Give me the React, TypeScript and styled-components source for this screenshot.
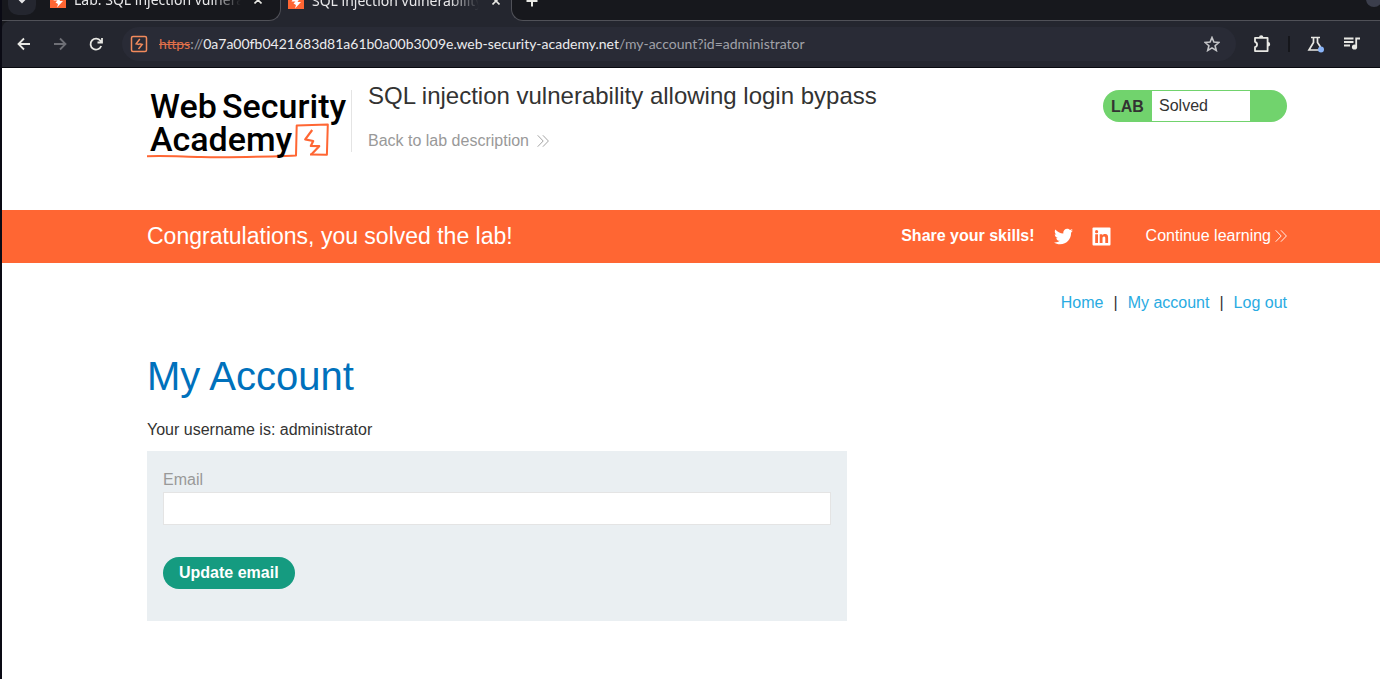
import React from "react";
import styled, { createGlobalStyle, css } from "styled-components";
import { FaTwitter } from "react-icons/fa";

const GlobalStyle = createGlobalStyle`
  * { box-sizing: border-box; }
  body {
    margin: 0;
    background: #fff;
    color: #333332;
    font: 16px/24px "Liberation Sans", Arial, sans-serif;
  }
  a { text-decoration: none; color: inherit; }
  button { font: inherit; border: 0; cursor: pointer; }
  svg { display: block; flex: none; }
`;

const Window = styled.div`
  min-height: 100vh;
  display: flex;
  flex-direction: column;
  border-left: 2px solid #0a0a14;
`;

const Browser = styled.div`
  background: #17181d;
  color: #e8e8ea;
  font-family: "Noto Sans", sans-serif;
  font-size: 14px;
  line-height: 20px;
`;

const TabStrip = styled.div`
  display: flex;
  height: 21px;
  background: #24262f;
  overflow: hidden;
`;

const segment = css`
  display: flex;
  align-items: flex-end;
  padding-bottom: 10px;
`;

const IdleTabs = styled.div`
  ${segment}
  width: 279px;
  gap: 14px;
  padding-left: 6px;
  padding-right: 18px;
  background: #17181d;
  border-bottom: 1px solid #505158;
  border-right: 1px solid #505158;
  border-bottom-right-radius: 12px;
`;

const ActiveTab = styled.div`
  ${segment}
  width: 230px;
  padding: 0 11px 10px 7px;
`;

const StripEnd = styled.div`
  ${segment}
  flex: 1;
  justify-content: space-between;
  padding-left: 11px;
  background: #17181d;
  border-bottom: 1px solid #505158;
  border-left: 1px solid #505158;
  border-bottom-left-radius: 12px;
`;

const TabSearch = styled.button`
  display: grid;
  place-items: center;
  width: 28px;
  height: 28px;
  margin-bottom: -5px;
  padding: 0;
  border-radius: 10px;
  background: #24262f;
  color: #e8e8ea;
`;

const TabBody = styled.div`
  display: flex;
  flex: 1;
  min-width: 0;
  align-items: center;
  gap: 8px;
`;

const TabTitle = styled.span`
  flex: 1;
  overflow: hidden;
  white-space: nowrap;
  mask-image: linear-gradient(to right, #000 80%, transparent 97%);
`;

const IconButton = styled.button<{ $dim?: boolean }>`
  display: grid;
  place-items: center;
  padding: 0;
  background: none;
  color: ${(p) => (p.$dim ? "#6e6f76" : "#e8e8e4")};
`;

const AccountDot = styled.span`
  width: 16px;
  height: 16px;
  margin: 0 -2px 3px 0;
  border-radius: 8px;
  background: #3b3e4c;
`;

const Toolbar = styled.div`
  display: flex;
  align-items: center;
  height: 47px;
  padding: 0 19px 0 14px;
  background: #24262f;
  border-top-left-radius: 8px;
  border-bottom: 1px solid #090a10;
`;

const NavButtons = styled.div`
  display: flex;
  gap: 20px;
`;

const AddressBar = styled.div`
  display: flex;
  flex: 1;
  align-items: center;
  height: 34px;
  margin: 0 17px 0 18px;
  padding: 0 16px 0 8px;
  border-radius: 17px;
  background: #292b36;
`;

const Address = styled.span`
  flex: 1;
  margin-left: 11px;
  font-family: Lato, sans-serif;
  white-space: nowrap;
  color: #a0a1a8;
  s { color: #e0704a; }
  b { font-weight: 400; color: #ececee; }
`;

const Extensions = styled.div`
  display: flex;
  align-items: center;
  gap: 18px;
`;

const Separator = styled.span`
  width: 2px;
  height: 16px;
  margin: 0 -1px;
  background: #15161b;
`;

const gutters = css`
  padding-left: 145px;
  padding-right: 93px;
`;

const Header = styled.header`
  ${gutters}
  display: flex;
  align-items: flex-start;
  min-height: 142px;
  padding-top: 14px;
`;

const Brand = styled.a`
  padding-top: 6px;
`;

const Intro = styled.div`
  flex: 1;
  padding-left: 16px;
`;

const Rule = styled.span`
  width: 1px;
  height: 62px;
  margin: 8px 0 0 4px;
  background: #e4e4e4;
`;

const LabTitle = styled.h2`
  margin: 0;
  font-size: 24px;
  line-height: 28px;
  font-weight: 400;
`;

const BackLink = styled.a`
  display: inline-flex;
  align-items: center;
  gap: 8px;
  margin-top: 19px;
  color: #999;
`;

const Status = styled.div`
  display: flex;
  width: 184px;
  height: 32px;
  margin-top: 8px;
  line-height: 33px;
  border-radius: 16px;
  background: #71d36d;
`;

const StatusLabel = styled.strong`
  width: 49px;
  padding-left: 8px;
`;

const StatusValue = styled.span`
  width: 98px;
  margin: 1px 0;
  padding-left: 7px;
  line-height: 30px;
  background: #fff;
`;

const Banner = styled.section`
  ${gutters}
  display: flex;
  align-items: center;
  min-height: 53px;
  padding-bottom: 1px;
  background: #ff6633;
  color: #fff;
`;

const BannerText = styled.h4`
  flex: 1;
  margin: 0;
  font-size: 23px;
  font-weight: 400;
`;

const Share = styled.div`
  display: flex;
  align-items: center;
  gap: 19px;
  margin-right: 35px;
`;

const Continue = styled.a`
  display: flex;
  align-items: center;
  gap: 4px;
`;

const Main = styled.main`
  ${gutters}
  padding-top: 28px;
`;

const AccountNav = styled.nav`
  display: flex;
  justify-content: flex-end;
  gap: 10px;
  a { color: #29abe2; }
`;

const PageTitle = styled.h1`
  margin: 37px 0 18px;
  font-size: 40px;
  line-height: 48px;
  font-weight: 400;
  color: #0071bc;
`;

const Username = styled.p`
  margin: 0 0 9px;
`;

const EmailForm = styled.form`
  max-width: 700px;
  padding: 17px 16px 32px;
  background: #eaeff2;
`;

const FieldLabel = styled.label`
  display: block;
  color: #999;
`;

const Field = styled.input`
  display: block;
  width: 100%;
  height: 33px;
  margin: 0 0 32px;
  padding: 0 8px;
  border: 1px solid #e4e4e4;
  background: #fff;
  font: inherit;
`;

const Submit = styled.button`
  height: 32px;
  padding: 0 16px;
  border-radius: 16px;
  background: #159b80;
  color: #fff;
  font-weight: 700;
`;

const Bolt = () => (
  <svg width="16" height="16" viewBox="0 0 16 16" aria-hidden="true">
    <rect width="16" height="16" fill="#ff6633" />
    <path d="M9 0 3.500 8.500h4L5.500 10.500l2.500 1.500L7 15.500l6-6.500H9.500L11.500 6H8.500L11 0z" fill="#fff" />
  </svg>
);

const Close = () => (
  <svg width="8" height="8" viewBox="0 0 8 8" stroke="currentColor" strokeWidth="1.6">
    <path d="M.5.5l7 7M7.500.5l-7 7" />
  </svg>
);

const Chevrons = () => (
  <svg width="12" height="14" viewBox="0 0 12 14" fill="none" stroke="currentColor" strokeWidth="0.9" aria-hidden="true">
    <path d="M.7 1.300 6.200 7 .7 12.700M5.900 1.300 11.400 7 5.900 12.700" />
  </svg>
);

const Logo = () => (
  <svg width="200" height="72" viewBox="0 0 200 72" fontFamily="Roboto, sans-serif" fontSize="34" fontWeight="500" fill="#000">
    <path d="M0 68.300C14 67.300 34 68.600 54 69C88 69.800 120 68.600 149 67.600L149.700 37.600L180.800 36.600L179.900 66.800L163 66.400" fill="none" stroke="#ff6633" strokeWidth="2" strokeLinejoin="round" />
    <path d="M165.200 42 158.200 51.300 166.200 53 163.800 58 172.200 58.200 164.300 66.400" fill="none" stroke="#ff6633" strokeWidth="2.200" strokeLinejoin="round" />
    <text x="3" y="30">Web</text>
    <text x="75" y="30">Security</text>
    <text x="3" y="63">Academy</text>
  </svg>
);

export default function App() {
  return (
    <Window>
      <GlobalStyle />
      <Browser>
        <TabStrip>
          <IdleTabs>
            <TabSearch aria-label="Search tabs">
              <svg width="10" height="6" viewBox="0 0 10 6" fill="none" stroke="currentColor" strokeWidth="2"><path d="M1 0l4 4 4-4" /></svg>
            </TabSearch>
            <TabBody>
              <Bolt />
              <TabTitle>Lab: SQL injection vulnerability allowing login bypass</TabTitle>
              <IconButton aria-label="Close tab"><Close /></IconButton>
            </TabBody>
          </IdleTabs>
          <ActiveTab>
            <TabBody>
              <Bolt />
              <TabTitle>SQL injection vulnerability allowing login bypass</TabTitle>
              <IconButton aria-label="Close tab"><Close /></IconButton>
            </TabBody>
          </ActiveTab>
          <StripEnd>
            <IconButton aria-label="New tab">
              <svg width="18" height="20" viewBox="0 0 18 20" stroke="currentColor" strokeWidth="2"><path d="M9 5.500v11M3.500 11h11" /></svg>
            </IconButton>
            <AccountDot />
          </StripEnd>
        </TabStrip>
        <Toolbar>
          <NavButtons>
            <IconButton aria-label="Back">
              <svg width="16" height="16" viewBox="0 0 16 16" fill="none" stroke="currentColor" strokeWidth="1.800"><path d="M14 8H3M8 2.500 2.500 8 8 13.500" /></svg>
            </IconButton>
            <IconButton aria-label="Forward" $dim>
              <svg width="16" height="16" viewBox="0 0 16 16" fill="none" stroke="currentColor" strokeWidth="1.800"><path d="M2 8h11M8 2.500 13.500 8 8 13.500" /></svg>
            </IconButton>
            <IconButton aria-label="Reload">
              <svg width="16" height="16" viewBox="0 0 16 16" fill="none" stroke="currentColor" strokeWidth="1.800"><path d="M13.200 10A5.500 5.500 0 1 1 12.500 4.800L14 6.300M14 2v4.500H9.500" /></svg>
            </IconButton>
          </NavButtons>
          <AddressBar>
            <svg width="18" height="18" viewBox="0 0 18 18" fill="none" stroke="#f28a5c" strokeWidth="1.500">
              <rect x="1.500" y="1.500" width="15" height="15" rx="1.500" />
              <path d="M9.800 4 6.200 8.700 9.300 9.500M8.500 14l3.700-4.500L9.300 8.700" />
            </svg>
            <Address><s>https</s>://<b>0a7a00fb0421683d81a61b0a00b3009e.web-security-academy.net</b>/my-account?id=administrator</Address>
            <IconButton aria-label="Bookmark">
              <svg width="16" height="16" viewBox="0 0 16 16" fill="none" stroke="#c4c5c8" strokeWidth="1.600"><path d="M8 1.500l1.900 4.600 5 .4-3.800 3.200 1.200 4.800L8 11.900l-4.300 2.600 1.200-4.800L1.100 6.500l5-.4z" /></svg>
            </IconButton>
          </AddressBar>
          <Extensions>
            <IconButton aria-label="Extensions">
              <svg width="18" height="18" viewBox="0 0 18 18" fill="none" stroke="currentColor" strokeWidth="1.800" strokeLinejoin="round">
                <path d="M2 2.900h12.600v13.200H2V12.200a2.800 2.800 0 0 0 0-5.400z" />
                <path d="M6 2.500a2.200 2.200 0 0 1 4.400 0zM15 7a2.200 2.200 0 0 1 0 4.400z" fill="currentColor" stroke="none" />
              </svg>
            </IconButton>
            <Separator />
            <IconButton aria-label="Labs">
              <svg width="18" height="18" viewBox="0 0 18 18" fill="none" stroke="currentColor" strokeWidth="1.700">
                <path d="M4 2.500h9M6.500 2.500v5L2 15h11M10.500 2.500v5l3 4.500" />
                <circle cx="14" cy="14.500" r="3" fill="#8ab4f8" stroke="none" />
              </svg>
            </IconButton>
            <IconButton aria-label="Media controls">
              <svg width="18" height="16" viewBox="0 0 18 16" fill="none" stroke="currentColor" strokeWidth="1.800">
                <path d="M1 2.500h9.500M1 6h9.500M1 9.500h6M13.200 11.500V2.500H17" />
                <circle cx="11.500" cy="11" r="2.600" fill="currentColor" stroke="none" />
              </svg>
            </IconButton>
          </Extensions>
        </Toolbar>
      </Browser>

      <Header>
        <Brand href="#" aria-label="Web Security Academy"><Logo /></Brand>
        <Rule />
        <Intro>
          <LabTitle>SQL injection vulnerability allowing login bypass</LabTitle>
          <BackLink href="#">Back to lab description <Chevrons /></BackLink>
        </Intro>
        <Status>
          <StatusLabel>LAB</StatusLabel>
          <StatusValue>Solved</StatusValue>
        </Status>
      </Header>

      <Banner>
        <BannerText>Congratulations, you solved the lab!</BannerText>
        <Share>
          <strong>Share your skills!</strong>
          <a href="#" aria-label="Twitter"><FaTwitter size={19} /></a>
          <a href="#" aria-label="LinkedIn">
            <svg width="19" height="19" viewBox="0 0 19 19">
              <rect x="0.500" y="0.500" width="18" height="18" rx="1" fill="#fff" />
              <g fill="#ff6633">
                <circle cx="4.600" cy="4.700" r="1.600" />
                <path d="M3.200 7.300H6V16H3.200zM7.700 7.300h2.700v1.200c.6-1 1.500-1.400 2.700-1.400 2.500 0 3 1.600 3 3.800V16h-2.800v-4.500c0-1.200-.1-2.100-1.300-2.100s-1.500.9-1.500 2.100V16H7.700z" />
              </g>
            </svg>
          </a>
        </Share>
        <Continue href="#">Continue learning <Chevrons /></Continue>
      </Banner>

      <Main>
        <AccountNav>
          <a href="#">Home</a><span>|</span><a href="#">My account</a><span>|</span><a href="#">Log out</a>
        </AccountNav>
        <PageTitle>My Account</PageTitle>
        <Username>Your username is: administrator</Username>
        <EmailForm onSubmit={(e) => e.preventDefault()}>
          <FieldLabel htmlFor="email">Email</FieldLabel>
          <Field id="email" type="email" name="email" />
          <Submit type="submit">Update email</Submit>
        </EmailForm>
      </Main>
    </Window>
  );
}
